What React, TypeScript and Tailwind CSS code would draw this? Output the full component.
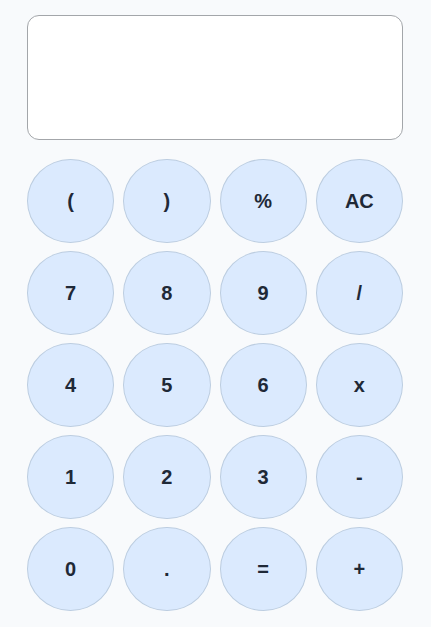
const keys = ['(', ')', '%', 'AC', '7', '8', '9', '/', '4', '5', '6', 'x', '1', '2', '3', '-', '0', '.', '=', '+'];

export default function App() {
  return (
    <main
      className="min-h-[627px] w-full bg-[#f8fafc] pl-[27px] pr-[28px] pt-[15px] pb-[16px]"
      style={{ fontFamily: '"Liberation Sans", Arial, sans-serif' }}
    >
      <div className="h-[125px] w-full rounded-[12px] border border-[#a3a6aa] bg-white" />
      <div className="mt-[19px] grid grid-cols-4 gap-x-[9px] gap-y-[8px]">
        {keys.map((k) => (
          <button
            key={k}
            className="flex h-[84px] items-center justify-center rounded-[50%] border border-[#bccde0] bg-[#dbeafe] text-[20px] font-bold text-[#1f2937]"
          >
            {k}
          </button>
        ))}
      </div>
    </main>
  );
}
